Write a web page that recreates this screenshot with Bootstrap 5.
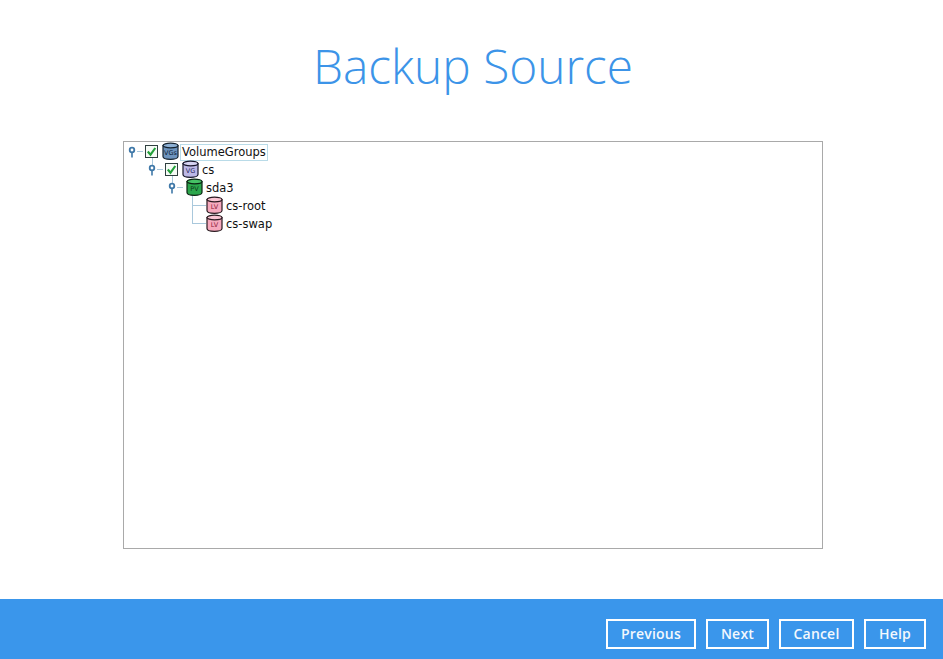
<!DOCTYPE html>
<html lang="en">
<head>
<meta charset="utf-8">
<title>Backup Source</title>
<link href="https://cdn.jsdelivr.net/npm/bootstrap@5.3.0/dist/css/bootstrap.min.css" rel="stylesheet">
<style>
html,body{height:100%;}
body{background:#fff;font-family:"Open Sans",sans-serif;overflow:hidden;}
.page-shell{height:659px;}
.page-title{font-family:"Open Sans",sans-serif;font-weight:300;font-size:47.8px;line-height:66px;color:#3c94e8;margin:33px 0 0;padding-left:3px;text-align:center;}
.tree-wrap{width:700px;height:408px;margin:42px 0 0 123px;border:1px solid #a9a9a9;position:relative;padding:1px 0 0 0;background:#fff;}
.tree-lines{position:absolute;left:0;top:0;pointer-events:none;}
.tree-row{height:18px;display:flex;align-items:center;font-family:"DejaVu Sans",sans-serif;font-size:11.5px;color:#111;white-space:nowrap;position:relative;}
.lvl0{padding-left:3px;}
.lvl1{padding-left:23px;}
.lvl2{padding-left:43px;}
.lvl3{padding-left:82px;}
.exp{width:10px;height:14px;flex:none;margin:0 9px 2px 0;}
.chk{width:13px;height:13px;flex:none;margin:0 4px 2px -1px;}
.dsk{width:17px;height:18px;flex:none;margin-bottom:2px;}
.lbl{margin-left:1px;padding:0 1px;line-height:15px;border:1px solid transparent;}
.lbl-focus{border-color:#b9dbe8;}
.disk-txt{font-family:"DejaVu Sans",sans-serif;font-size:6.5px;font-weight:400;text-anchor:middle;}
.bottom-bar{height:60px;background:#3a96eb;margin-top:50px;padding:20px 17px 0 0;column-gap:10px;}
.act-btn{font-family:"Open Sans",sans-serif;font-weight:600;font-size:14px;line-height:1;color:#f3f8fd;background:transparent;border:2px solid #fff;border-radius:0;padding:0;height:30px;letter-spacing:.2px;}
.act-btn:hover{color:#fff;background:transparent;border-color:#fff;}
.w-prev{width:90px;}.w-next{width:63px;}.w-cancel{width:75px;}.w-help{width:62px;}
</style>
</head>
<body>
<div class="page-shell d-flex flex-column">
  <h1 class="page-title">Backup Source</h1>
  <div class="tree-wrap">
    <svg class="tree-lines" width="200" height="100" viewBox="0 0 200 100">
      <g stroke="#a9c8dc" stroke-width="1" fill="none" shape-rendering="crispEdges">
        <path d="M13 9.500H19M33 27.500H39M53 45.500H59"/>
        <path d="M28.500 16V23M48.500 34V41"/>
        <path d="M68.500 53V81.500M68.500 63.500H82M68.500 81.500H82"/>
      </g>
    </svg>
    <div class="tree-row lvl0">
      <svg class="exp" viewBox="0 0 10 14"><circle cx="5" cy="6" r="2.300" fill="#fff" stroke="#3f78a8" stroke-width="1.800"/><path d="M5 8.500v5" stroke="#3f78a8" stroke-width="1.600"/></svg>
      <svg class="chk" viewBox="0 0 13 13"><rect x=".5" y=".5" width="12" height="12" fill="#f6fbf6" stroke="#2f3f3f"/><path d="M2.800 6.500l2.700 3.200L10.300 3" fill="none" stroke="#22a03a" stroke-width="2.100"/></svg>
      <svg class="dsk" viewBox="0 0 17 18"><path d="M1 3.500v11c0 1.500 3 2.800 7.500 2.800s7.500-1.300 7.500-2.800v-11z" fill="#6d93bd" stroke="#14222f" stroke-width="1.200"/><ellipse cx="8.500" cy="3.500" rx="7.500" ry="2.300" fill="#8db0d4" stroke="#14222f" stroke-width="1.200"/><text class="disk-txt" x="8.500" y="12.500" fill="#0c2034">VGs</text></svg>
      <span class="lbl lbl-focus">VolumeGroups</span>
    </div>
    <div class="tree-row lvl1">
      <svg class="exp" viewBox="0 0 10 14"><circle cx="5" cy="6" r="2.300" fill="#fff" stroke="#3f78a8" stroke-width="1.800"/><path d="M5 8.500v5" stroke="#3f78a8" stroke-width="1.600"/></svg>
      <svg class="chk" viewBox="0 0 13 13"><rect x=".5" y=".5" width="12" height="12" fill="#f6fbf6" stroke="#2f3f3f"/><path d="M2.800 6.500l2.700 3.200L10.300 3" fill="none" stroke="#22a03a" stroke-width="2.100"/></svg>
      <svg class="dsk" viewBox="0 0 17 18"><path d="M1 3.500v11c0 1.500 3 2.800 7.500 2.800s7.500-1.300 7.500-2.800v-11z" fill="#bcb8e6" stroke="#16162a" stroke-width="1.200"/><ellipse cx="8.500" cy="3.500" rx="7.500" ry="2.300" fill="#d6d3f2" stroke="#16162a" stroke-width="1.200"/><text class="disk-txt" x="8.500" y="12.500" fill="#2a2860">VG</text></svg>
      <span class="lbl">cs</span>
    </div>
    <div class="tree-row lvl2">
      <svg class="exp" viewBox="0 0 10 14"><circle cx="5" cy="6" r="2.300" fill="#fff" stroke="#3f78a8" stroke-width="1.800"/><path d="M5 8.500v5" stroke="#3f78a8" stroke-width="1.600"/></svg>
      <svg class="dsk" viewBox="0 0 17 18"><path d="M1 3.500v11c0 1.500 3 2.800 7.500 2.800s7.500-1.300 7.500-2.800v-11z" fill="#2ba64c" stroke="#0a2412" stroke-width="1.200"/><ellipse cx="8.500" cy="3.500" rx="7.500" ry="2.300" fill="#46c266" stroke="#0a2412" stroke-width="1.200"/><text class="disk-txt" x="8.500" y="12.500" fill="#0b3a1a">PV</text></svg>
      <span class="lbl">sda3</span>
    </div>
    <div class="tree-row lvl3">
      <svg class="dsk" viewBox="0 0 17 18"><path d="M1 3.500v11c0 1.500 3 2.800 7.500 2.800s7.500-1.300 7.500-2.800v-11z" fill="#f6a9bd" stroke="#2a1a20" stroke-width="1.200"/><ellipse cx="8.500" cy="3.500" rx="7.500" ry="2.300" fill="#fbc6d4" stroke="#2a1a20" stroke-width="1.200"/><text class="disk-txt" x="8.500" y="13" fill="#8a1c3a">LV</text></svg>
      <span class="lbl">cs-root</span>
    </div>
    <div class="tree-row lvl3">
      <svg class="dsk" viewBox="0 0 17 18"><path d="M1 3.500v11c0 1.500 3 2.800 7.500 2.800s7.500-1.300 7.500-2.800v-11z" fill="#f6a9bd" stroke="#2a1a20" stroke-width="1.200"/><ellipse cx="8.500" cy="3.500" rx="7.500" ry="2.300" fill="#fbc6d4" stroke="#2a1a20" stroke-width="1.200"/><text class="disk-txt" x="8.500" y="13" fill="#8a1c3a">LV</text></svg>
      <span class="lbl">cs-swap</span>
    </div>
  </div>
  <div class="bottom-bar d-flex justify-content-end">
    <button type="button" class="btn act-btn w-prev">Previous</button>
    <button type="button" class="btn act-btn w-next">Next</button>
    <button type="button" class="btn act-btn w-cancel">Cancel</button>
    <button type="button" class="btn act-btn w-help">Help</button>
  </div>
</div>
<script src="https://cdn.jsdelivr.net/npm/bootstrap@5.3.0/dist/js/bootstrap.bundle.min.js"></script>
</body>
</html>
